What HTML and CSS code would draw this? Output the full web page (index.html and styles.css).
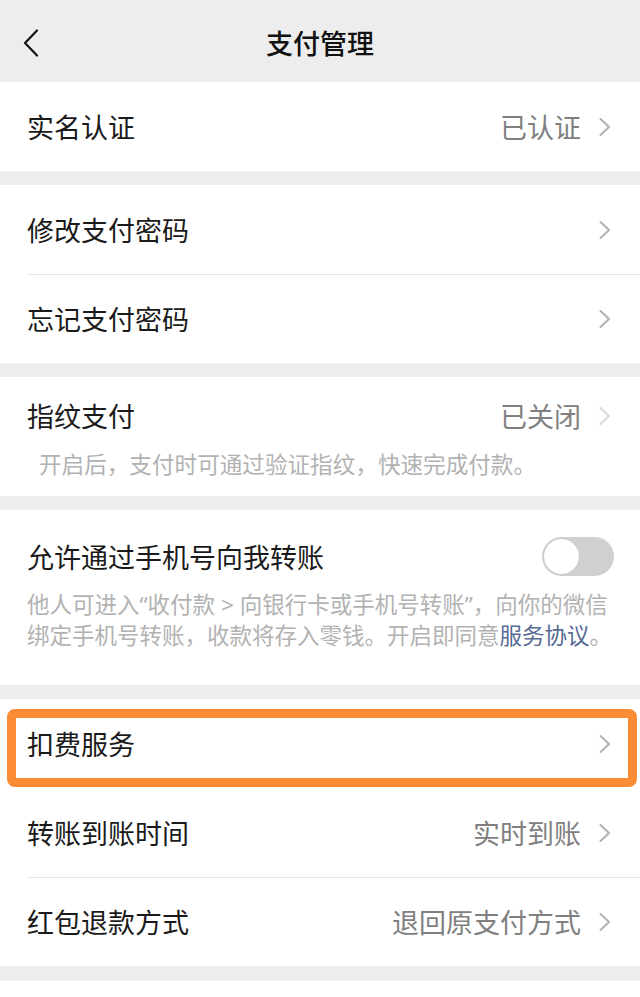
FILE: index.html
```html
<!DOCTYPE html>
<html lang="zh-CN">
<head>
<meta charset="utf-8">
<title>支付管理</title>
<link rel="stylesheet" href="styles.css">
</head>
<body>
<header class="header">
  <div class="back">
    <svg width="16" height="28" viewBox="0 0 16 28"><path d="M14 1.5 L2 14 L14 26.5" fill="none" stroke="#111" stroke-width="2.2" stroke-linecap="round" stroke-linejoin="round"/></svg>
  </div>
  <div class="title">支付管理</div>
  <div></div>
</header>
<main class="list">
  <section class="group">
    <div class="row"><div class="row-inner">
      <span class="label">实名认证</span><span class="value">已认证</span>
      <svg class="chev" width="12" height="20" viewBox="0 0 12 20"><path d="M1.5 2 L10 10 L1.5 18" fill="none" stroke="#b2b2b2" stroke-width="2" stroke-linecap="round" stroke-linejoin="round"/></svg>
    </div></div>
  </section>
  <section class="group">
    <div class="row"><div class="row-inner">
      <span class="label">修改支付密码</span><span class="value"></span>
      <svg class="chev" width="12" height="20" viewBox="0 0 12 20"><path d="M1.5 2 L10 10 L1.5 18" fill="none" stroke="#b2b2b2" stroke-width="2" stroke-linecap="round" stroke-linejoin="round"/></svg>
    </div></div>
    <div class="row"><div class="row-inner divided">
      <span class="label">忘记支付密码</span><span class="value"></span>
      <svg class="chev" width="12" height="20" viewBox="0 0 12 20"><path d="M1.5 2 L10 10 L1.5 18" fill="none" stroke="#b2b2b2" stroke-width="2" stroke-linecap="round" stroke-linejoin="round"/></svg>
    </div></div>
  </section>
  <section class="group finger">
    <div class="finger-head">
      <span class="label">指纹支付</span><span class="value">已关闭</span>
      <svg class="chev" width="12" height="20" viewBox="0 0 12 20"><path d="M1.5 2 L10 10 L1.5 18" fill="none" stroke="#dadada" stroke-width="2" stroke-linecap="round" stroke-linejoin="round"/></svg>
    </div>
    <p class="finger-note">开启后，支付时可通过验证指纹，快速完成付款。</p>
  </section>
  <section class="group phone">
    <div class="phone-head">
      <span class="label">允许通过手机号向我转账</span>
      <span class="switch"><span class="knob"></span></span>
    </div>
    <p class="phone-note">他人可进入“收付款 &gt; 向银行卡或手机号转账”，向你的微信<br>绑定手机号转账，收款将存入零钱。开启即同意<span class="link">服务协议</span>。</p>
  </section>
  <section class="group">
    <div class="row highlighted"><div class="row-inner">
      <span class="label">扣费服务</span><span class="value"></span>
      <svg class="chev" width="12" height="20" viewBox="0 0 12 20"><path d="M1.5 2 L10 10 L1.5 18" fill="none" stroke="#b2b2b2" stroke-width="2" stroke-linecap="round" stroke-linejoin="round"/></svg>
      <span class="mark"></span>
    </div></div>
    <div class="row"><div class="row-inner">
      <span class="label">转账到账时间</span><span class="value">实时到账</span>
      <svg class="chev" width="12" height="20" viewBox="0 0 12 20"><path d="M1.5 2 L10 10 L1.5 18" fill="none" stroke="#b2b2b2" stroke-width="2" stroke-linecap="round" stroke-linejoin="round"/></svg>
    </div></div>
    <div class="row"><div class="row-inner divided">
      <span class="label">红包退款方式</span><span class="value">退回原支付方式</span>
      <svg class="chev" width="12" height="20" viewBox="0 0 12 20"><path d="M1.5 2 L10 10 L1.5 18" fill="none" stroke="#b2b2b2" stroke-width="2" stroke-linecap="round" stroke-linejoin="round"/></svg>
    </div></div>
  </section>
</main>
</body>
</html>
```

FILE: styles.css
```css
* { box-sizing: border-box; }
html, body {
  margin: 0;
  padding: 0;
  background: #ffffff;
  font-family: "Noto Sans CJK SC", "Noto Sans", sans-serif;
  color: #1a1a1a;
}
.header {
  height: 82px;
  background: #ededed;
  display: grid;
  grid-template-columns: 1fr auto 1fr;
  align-items: center;
  padding-top: 4px;
}
.back {
  padding-left: 23px;
  display: flex;
  align-items: center;
}
.back svg { display: block; }
.title {
  font-size: 27px;
  font-weight: 500;
  line-height: 36px;
  color: #111;
}
.list {
  background: #ededed;
  display: flex;
  flex-direction: column;
  gap: 14px;
  padding-bottom: 15px;
}
.group {
  background: #ffffff;
}
.row {
  padding-left: 27px;
  position: relative;
}
.row-inner {
  height: 89px;
  display: flex;
  align-items: center;
  padding-right: 29px;
}
.row-inner.divided {
  border-top: 1px solid #e6e6e6;
}
.label {
  font-size: 27px;
  line-height: 36px;
  color: #1a1a1a;
  flex: 1;
  white-space: nowrap;
}
.value {
  font-size: 27px;
  line-height: 36px;
  color: #808080;
  margin-right: 18px;
  white-space: nowrap;
}
.chev { display: block; flex: none; }
.finger {
  padding: 21px 0 17px 0;
}
.finger-head {
  display: flex;
  align-items: center;
  height: 36px;
  padding: 0 29px 0 27px;
}
.finger-note {
  margin: 15px 0 0 0;
  padding-left: 39px;
  font-size: 22.6px;
  line-height: 30px;
  color: #b2b2b2;
}
.phone {
  padding: 27px 0 34px 0;
}
.phone-head {
  display: flex;
  align-items: center;
  height: 39px;
  padding: 0 26px 0 27px;
}
.switch {
  width: 72px;
  height: 39px;
  border-radius: 20px;
  background: #d0d0d0;
  display: flex;
  align-items: center;
  padding-left: 2px;
  flex: none;
}
.knob {
  width: 35px;
  height: 35px;
  border-radius: 50%;
  background: #ffffff;
  box-shadow: 0 0 1px rgba(0,0,0,0.15);
}
.phone-note {
  margin: 13px 0 0 0;
  padding: 0 10px 0 27px;
  font-family: "Noto Sans", "Noto Sans CJK SC", sans-serif;
  font-size: 22.5px;
  line-height: 31px;
  color: #b2b2b2;
  white-space: nowrap;
}
.link { color: #576b95; }
.mark {
  position: absolute;
  left: 7px;
  right: 3px;
  top: 10px;
  height: 78px;
  border: 9px solid #fc8b36;
  border-radius: 8px;
  pointer-events: none;
}
```
